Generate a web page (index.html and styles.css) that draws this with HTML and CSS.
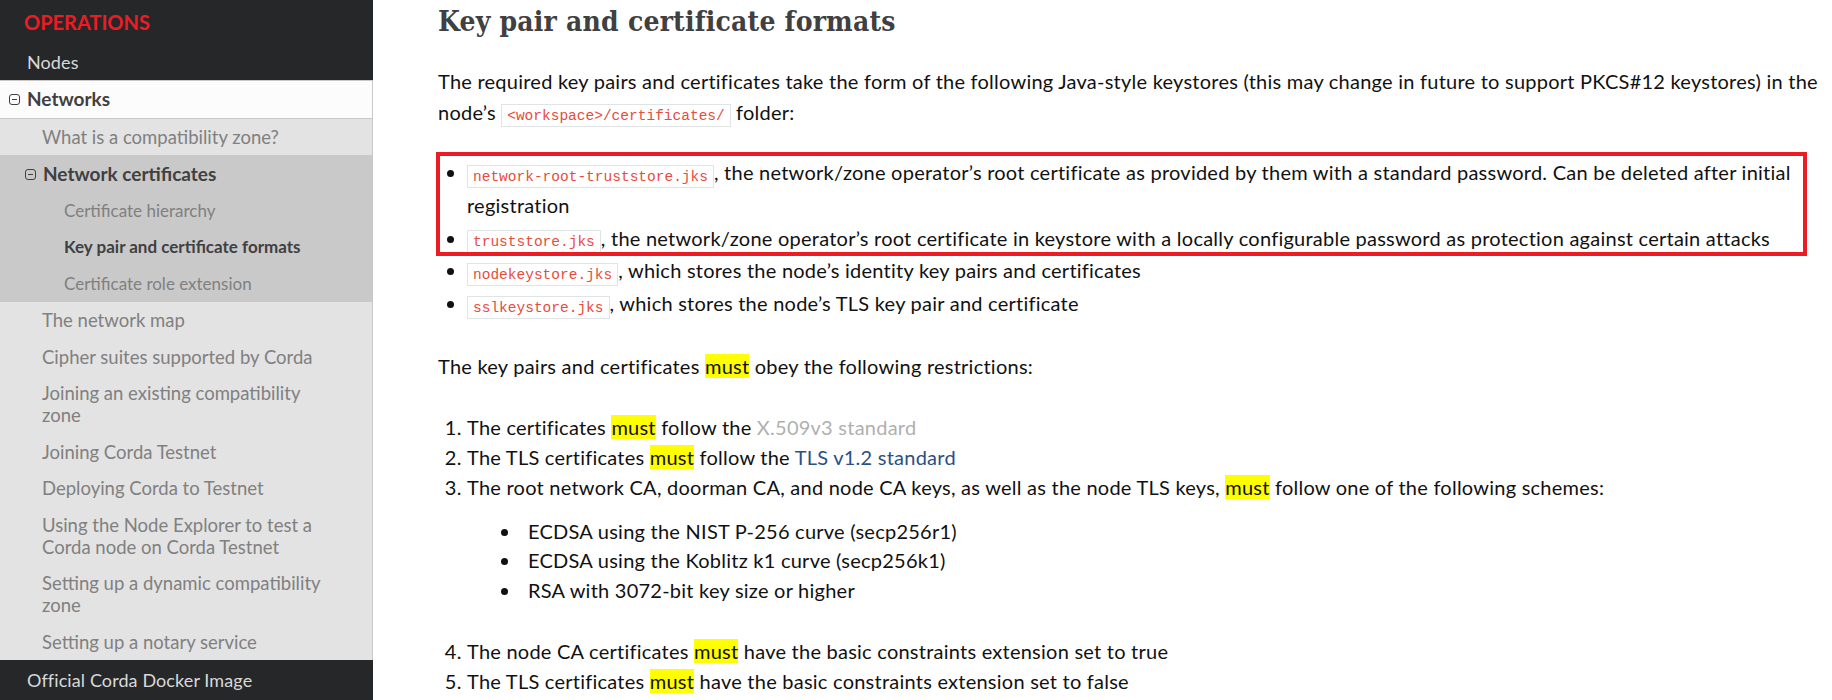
FILE: index.html
```html
<!DOCTYPE html>
<html lang="en">
<head>
<meta charset="utf-8">
<title>Key pair and certificate formats</title>
<link rel="stylesheet" href="styles.css">
</head>
<body>
<div class="page">
  <nav class="sidebar">
    <div class="caption">OPERATIONS</div>
    <a class="l1 dark" href="#">Nodes</a>
    <div class="section">
      <a class="l1 current" href="#"><svg class="tog" viewBox="0 0 11 11"><rect x="0.5" y="0.5" width="10" height="10" rx="2.5" fill="none" stroke="currentColor"/><path d="M3 5.5h5" stroke="currentColor"/></svg>Networks</a>
      <a class="l2" href="#">What is a compatibility zone?</a>
      <div class="group">
        <a class="l2 current" href="#"><svg class="tog" viewBox="0 0 11 11"><rect x="0.5" y="0.5" width="10" height="10" rx="2.5" fill="none" stroke="currentColor"/><path d="M3 5.5h5" stroke="currentColor"/></svg>Network certificates</a>
        <a class="l3" href="#">Certificate hierarchy</a>
        <a class="l3 active" href="#">Key pair and certificate formats</a>
        <a class="l3" href="#">Certificate role extension</a>
      </div>
      <a class="l2" href="#">The network map</a>
      <a class="l2" href="#">Cipher suites supported by Corda</a>
      <a class="l2" href="#">Joining an existing compatibility zone</a>
      <a class="l2" href="#">Joining Corda Testnet</a>
      <a class="l2" href="#">Deploying Corda to Testnet</a>
      <a class="l2" href="#">Using the Node Explorer to test a Corda node on Corda Testnet</a>
      <a class="l2" href="#">Setting up a dynamic compatibility zone</a>
      <a class="l2" href="#">Setting up a notary service</a>
    </div>
    <a class="l1 dark" href="#">Official Corda Docker Image</a>
  </nav>
  <main class="content">
    <h1>Key pair and certificate formats</h1>
    <p class="intro">The required key pairs and certificates take the form of the following Java-style keystores (this may change in future to support PKCS#12 keystores) in the node’s <code>&lt;workspace&gt;/certificates/</code> folder:</p>
    <div class="files-wrap">
      <ul class="files">
        <li><code>network-root-truststore.jks</code>, the network/zone operator’s root certificate as provided by them with a standard password. Can be deleted after initial registration</li>
        <li><code>truststore.jks</code>, the network/zone operator’s root certificate in keystore with a locally configurable password as protection against certain attacks</li>
        <li><code>nodekeystore.jks</code>, which stores the node’s identity key pairs and certificates</li>
        <li><code>sslkeystore.jks</code>, which stores the node’s TLS key pair and certificate</li>
      </ul>
      <span class="annot"></span>
    </div>
    <p class="rules">The key pairs and certificates <mark>must</mark> obey the following restrictions:</p>
    <ol class="restrictions">
      <li>The certificates <mark>must</mark> follow the <a class="visited" href="#">X.509v3 standard</a></li>
      <li>The TLS certificates <mark>must</mark> follow the <a class="link" href="#">TLS v1.2 standard</a></li>
      <li>The root network CA, doorman CA, and node CA keys, as well as the node TLS keys, <mark>must</mark> follow one of the following schemes:
        <ul class="schemes">
          <li>ECDSA using the NIST P-256 curve (secp256r1)</li>
          <li>ECDSA using the Koblitz k1 curve (secp256k1)</li>
          <li>RSA with 3072-bit key size or higher</li>
        </ul>
      </li>
      <li>The node CA certificates <mark>must</mark> have the basic constraints extension set to true</li>
      <li>The TLS certificates <mark>must</mark> have the basic constraints extension set to false</li>
    </ol>
  </main>
</div>
</body>
</html>
```
FILE: styles.css
```css
html, body {
  margin: 0;
  padding: 0;
  height: 700px;
  overflow: hidden;
  background: #fff;
}

body {
  font-family: Lato, "Open Sans", sans-serif;
  color: #111;
}

.page {
  display: flex;
  align-items: flex-start;
  height: 700px;
}

/* ---------- sidebar ---------- */
.sidebar {
  width: 373px;
  flex-shrink: 0;
  height: 700px;
  background: #262729;
  display: flex;
  flex-direction: column;
}

.sidebar a {
  text-decoration: none;
  display: flex;
  align-items: flex-start;
}

.caption {
  height: 44px;
  line-height: 44px;
  padding-left: 24px;
  color: #ec1c24;
  font-weight: 700;
  font-size: 20px;
}

.l1.dark {
  color: #d9d9d9;
  font-size: 18px;
  line-height: 22px;
  padding: 7px 0 7px 27px;
  letter-spacing: 0.1px;
}

.section {
  background: #e3e3e3;
  border-right: 1px solid #c9c9c9;
  width: 372px;
}

.l1.current {
  background: #fcfcfc;
  border-top: 1px solid #c9c9c9;
  border-bottom: 1px solid #c9c9c9;
  color: #404040;
  font-weight: 700;
  font-size: 19px;
  line-height: 22px;
  padding: 7.25px 0 7.25px 9px;
}

.tog {
  width: 11px;
  height: 11px;
  margin: 6px 7px 0 0;
  flex-shrink: 0;
  color: #404040;
}

.l2 {
  color: #808080;
  font-size: 18.5px;
  line-height: 22px;
  padding: 7.25px 38px 7.25px 42px;
}

.group {
  background: #c9c9c9;
}

.l2.current {
  color: #404040;
  font-weight: 700;
  font-size: 19px;
  padding: 8px 0 7.5px 25px;
}

.l3 {
  color: #808080;
  font-size: 17px;
  line-height: 22px;
  padding: 7.25px 0 7.25px 64px;
}

.l3.active {
  color: #404040;
  font-weight: 700;
}

.sidebar > .l1.dark:last-child {
  padding-top: 9px;
}

/* ---------- content ---------- */
.content {
  flex: 1;
  min-width: 0;
  padding-left: 65px;
  font-size: 20px;
  letter-spacing: 0.24px;
}

h1 {
  margin: 0;
  height: 44px;
  line-height: 44px;
  font-family: "DejaVu Serif", "Liberation Serif", serif;
  font-stretch: condensed;
  font-weight: 700;
  font-size: 28px;
  letter-spacing: 0.2px;
  color: #404040;
}

p {
  margin: 0;
  line-height: 30.6px;
}

.intro {
  margin-top: 22px;
}

code {
  font-family: "Liberation Mono", "DejaVu Sans Mono", monospace;
  font-size: 14.5px;
  letter-spacing: 0;
  line-height: 1;
  color: #e74c3c;
  background: #fff;
  border: 1px solid #e1e4e5;
  padding: 2.5px 5px;
  white-space: nowrap;
}

.files-wrap {
  position: relative;
  margin-top: 29px;
}

.files {
  margin: 0;
  padding-left: 29px;
  width: 1340px;
  line-height: 32.75px;
}

.annot {
  position: absolute;
  left: -2px;
  top: -4px;
  width: 1363px;
  height: 96px;
  border: 4px solid #ec1c24;
  pointer-events: none;
}

.rules {
  margin-top: 31px;
}

mark {
  background: #ffff00;
  color: inherit;
}

.restrictions {
  margin: 30px 0 0;
  padding-left: 29px;
  line-height: 30px;
}

.schemes {
  margin: 15px 0 31px;
  padding-left: 54px;
  line-height: 29.5px;
  list-style-type: disc;
}

.schemes li {
  padding-left: 7px;
}

a.visited {
  color: #b0b0b0;
  text-decoration: none;
}

a.link {
  color: #2b4f86;
  text-decoration: none;
}
```
